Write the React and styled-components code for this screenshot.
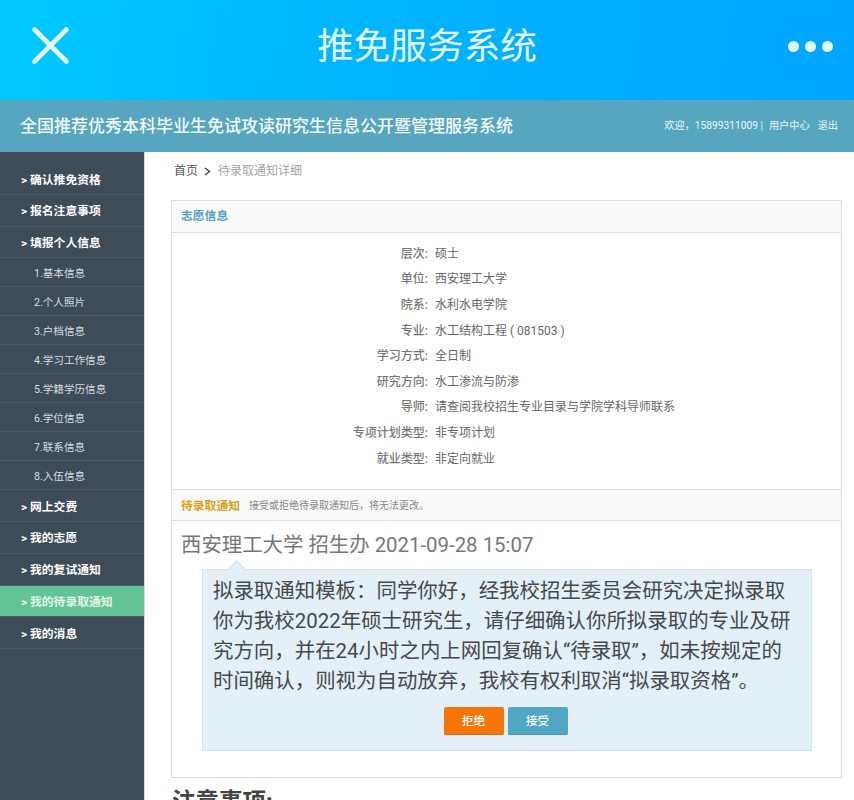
import React from "react";
import styled, { createGlobalStyle } from "styled-components";

const Global = createGlobalStyle`
  html, body { margin: 0; padding: 0; background: #fff; }
  body { font-family: "Roboto", "Noto Sans CJK SC", sans-serif; }
  * { box-sizing: border-box; }
`;
const CJK = `"Roboto", "Noto Sans CJK SC", sans-serif`;
const Page = styled.div`width: 854px; height: 800px; overflow: hidden; display: flex; flex-direction: column;`;
const AppBar = styled.header`
  height: 100px; flex: none; display: grid; grid-template-columns: 100px 1fr 100px; align-items: center;
  background: linear-gradient(100deg, #00c9ff 0%, #00b4ff 45%, #00a5ff 100%);
`;
const CloseIcon = styled.svg`width: 44px; height: 44px; margin: -11px 0 0 28px; display: block;`;
const AppTitle = styled.h1`
  margin: -6px 0 0; text-align: center; font: 400 36.7px/44px ${CJK}; color: #e4f8ff;
`;
const Dots = styled.div`display: flex; gap: 6px; justify-content: flex-end; padding-right: 21px; margin-top: -8px;`;
const Dot = styled.span`width: 11px; height: 11px; border-radius: 50%; background: #e2f5ff;`;
const SiteBar = styled.div`
  height: 52px; flex: none; display: flex; align-items: center; justify-content: space-between;
  padding: 0 16px 0 20px; background: #56a6bf; color: #fff;
`;
const SiteTitle = styled.div`font: 500 17px/24px ${CJK}; color: #f3fafc;`;
const UserLinks = styled.div`display: flex; gap: 8px; font: 400 10.2px/14px ${CJK}; color: #edf6f9; margin-top: -1px;`;
const Welcome = styled.span`margin-right: -2px;`;
const Main = styled.div`flex: 1; display: flex; min-height: 0;`;
const Sidebar = styled.nav`
  width: 145px; flex: none; padding-top: 11.4px; background: #3e4c57; border-right: 1px solid #cfd6dc;
`;
const NavItem = styled.div`
  height: ${p => (p.$sub ? "29px" : "31.7px")};
  display: flex; align-items: center;
  padding-left: ${p => (p.$sub ? "34px" : "21px")};
  padding-top: ${p => (p.$sub ? "3px" : "2px")};
  border-bottom: 1px solid #4d5a65;
  background: ${p => (p.$active ? "#62c496" : "transparent")};
  color: ${p => (p.$sub ? "#d8dde0" : p.$active ? "#e4f6ec" : "#fff")};
  font: ${p => (p.$sub ? "400 10.6px/14px" : "700 11.8px/16px")} ${CJK};
  white-space: pre;
`;
const Content = styled.main`flex: 1; padding: 0 12px 0 26px; min-width: 0;`;
const Crumbs = styled.div`
  height: 48px; display: flex; align-items: center; gap: 6px; padding: 0 0 10px 3px;
  font: 400 12px/16px ${CJK}; color: #a3a3a3;
`;
const CrumbHome = styled.span`color: #555;`;
const CrumbIcon = styled.svg`width: 7px; height: 9px; display: block; margin-right: 1px;`;
const Panel = styled.section`border: 1px solid #dcdcdc; height: 578px; background: #fff;`;
const PanelHead = styled.div`
  height: 32px; display: flex; align-items: center; gap: 9px; padding-left: 9px;
  padding-bottom: ${p => (p.$top ? "0" : "1px")};
  padding-top: ${p => (p.$top ? "2px" : "0")};
  background: #f9f9f9; border-bottom: 1px solid #e0e0e0;
  ${p => p.$top && "border-top: 1px solid #e0e0e0;"}
`;
const HeadTitle = styled.span`font: 700 11.8px/14px ${CJK}; color: ${p => p.$c};`;
const HeadNote = styled.span`font: 400 10px/14px ${CJK}; color: #888;`;
const Rows = styled.div`height: 256px; padding-top: 8px;`;
const Row = styled.div`
  height: 25.6px; display: grid; grid-template-columns: 256px 1fr; column-gap: 7px; align-items: center;
  font: 400 12px/16px ${CJK};
`;
const Label = styled.span`text-align: right; font-weight: 500; color: #777;`;
const Value = styled.span`color: #666;`;
const Notice = styled.div`padding: 11px 30px 0 9px;`;
const NoticeHead = styled.div`font: 400 20.4px/26px ${CJK}; color: #777;`;
const Bubble = styled.div`
  position: relative; margin: 11px 0 0 21px; width: 610px; height: 182px; padding: 6px 10px 0 10px;
  background: #e3f0f8; border: 1px solid #d3e4ee;
  &::before {
    content: ""; position: absolute; top: -7px; left: 27px; width: 12px; height: 12px;
    background: #e3f0f8; border-left: 1px solid #d3e4ee; border-top: 1px solid #d3e4ee;
    transform: rotate(45deg);
  }
`;
const BubbleText = styled.p`margin: 0; font: 400 20.45px/30px ${CJK}; color: #484848;`;
const Actions = styled.div`display: flex; justify-content: center; gap: 4px; margin-top: 11px; padding-right: 3px;`;
const Action = styled.button`
  width: ${p => p.$w}px; height: 28px; border: 0; border-bottom: 1px solid ${p => p.$edge}; border-radius: 2px; padding: 0;
  background: ${p => p.$bg}; color: #fff; font: 500 11.5px/14px ${CJK};
`;
const Footnote = styled.h2`margin: 9px 0 0 1px; font: 700 23.5px/30px ${CJK}; color: #444;`;

const COLON = "\uFF1A";
const COMMA = "\uFF0C";
const LQ = "\u201C";
const RQ = "\u201D";

const nav = [
  ["> 确认推免资格"], ["> 报名注意事项"], ["> 填报个人信息"],
  ["1.基本信息", 1], ["2.个人照片", 1], ["3.户档信息", 1], ["4.学习工作信息", 1],
  ["5.学籍学历信息", 1], ["6.学位信息", 1], ["7.联系信息", 1], ["8.入伍信息", 1],
  ["> 网上交费"], ["> 我的志愿"], ["> 我的复试通知"], ["> 我的待录取通知", 0, 1], ["> 我的消息"],
];
const rows = [
  ["层次", "硕士"], ["单位", "西安理工大学"], ["院系", "水利水电学院"],
  ["专业", "水工结构工程 ( 081503 )"], ["学习方式", "全日制"], ["研究方向", "水工渗流与防渗"],
  ["导师", "请查阅我校招生专业目录与学院学科导师联系"], ["专项计划类型", "非专项计划"], ["就业类型", "非定向就业"],
];
const welcome = `欢迎${COMMA}15899311009 | `;
const letter = `拟录取通知模板${COLON}同学你好${COMMA}经我校招生委员会研究决定拟录取你为我校2022年硕士研究生${COMMA}请仔细确认你所拟录取的专业及研究方向${COMMA}并在24小时之内上网回复确认${LQ}待录取${RQ}${COMMA}如未按规定的时间确认${COMMA}则视为自动放弃${COMMA}我校有权利取消${LQ}拟录取资格${RQ}。`;
const note = `接受或拒绝待录取通知后${COMMA}将无法更改。`;

export default function App() {
  return (
    <Page>
      <Global />
      <AppBar>
        <CloseIcon viewBox="0 0 44 44">
          <path d="M6.5 6.5 L38.5 38.5 M38.5 6.5 L6.5 38.5" stroke="#e6f9ff" strokeWidth="4.6" strokeLinecap="round" fill="none" />
        </CloseIcon>
        <AppTitle>推免服务系统</AppTitle>
        <Dots><Dot /><Dot /><Dot /></Dots>
      </AppBar>
      <SiteBar>
        <SiteTitle>全国推荐优秀本科毕业生免试攻读研究生信息公开暨管理服务系统</SiteTitle>
        <UserLinks>
          <Welcome>{welcome}</Welcome><span>用户中心</span><span>退出</span>
        </UserLinks>
      </SiteBar>
      <Main>
        <Sidebar>
          {nav.map(([t, sub, active]) => (
            <NavItem key={t} $sub={!!sub} $active={!!active}>{t}</NavItem>
          ))}
        </Sidebar>
        <Content>
          <Crumbs>
            <CrumbHome>首页</CrumbHome>
            <CrumbIcon viewBox="0 0 7 9"><path d="M1 1 L5.5 4.5 L1 8" stroke="#444" strokeWidth="1.5" fill="none" /></CrumbIcon>
            <span>待录取通知详细</span>
          </Crumbs>
          <Panel>
            <PanelHead><HeadTitle $c="#4da0bb">志愿信息</HeadTitle></PanelHead>
            <Rows>
              {rows.map(([l, v]) => (
                <Row key={l}><Label>{l + ":"}</Label><Value>{v}</Value></Row>
              ))}
            </Rows>
            <PanelHead $top>
              <HeadTitle $c="#d4a017">待录取通知</HeadTitle>
              <HeadNote>{note}</HeadNote>
            </PanelHead>
            <Notice>
              <NoticeHead>西安理工大学 招生办 2021-09-28 15:07</NoticeHead>
              <Bubble>
                <BubbleText>{letter}</BubbleText>
                <Actions>
                  <Action $w={60} $bg="#f57607" $edge="#d9670a">拒绝</Action>
                  <Action $w={60} $bg="#51a6c3" $edge="#4692ab">接受</Action>
                </Actions>
              </Bubble>
            </Notice>
          </Panel>
          <Footnote>{"注意事项:"}</Footnote>
        </Content>
      </Main>
    </Page>
  );
}
